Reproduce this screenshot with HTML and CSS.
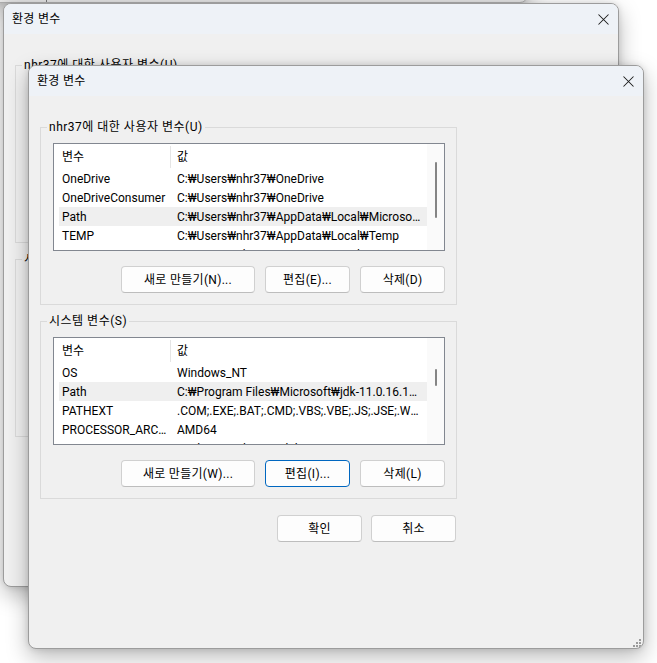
FILE: index.html
```html
<!DOCTYPE html>
<html lang="ko">
<head>
<meta charset="utf-8">
<title>환경 변수</title>
<link rel="stylesheet" href="styles.css">
</head>
<body>
<div class="desktop">
  <div class="window win-third"><div class="third-edge"></div></div>

  <div class="window win-back">
    <div class="titlebar">
      <span class="title">환경 변수</span>
      <svg class="close" width="11" height="11" viewBox="0 0 11 11"><path d="M0.5 0.5L10.5 10.5M10.5 0.5L0.5 10.5" stroke="#1b1b1b" stroke-width="1.05" fill="none"/></svg>
    </div>
    <div class="content">
      <section class="group">
        <div class="group-label">nhr37에 대한 사용자 변수(U)</div>
        <div class="list">
          <div class="list-body">
            <div class="row head"><span class="c1">변수</span><span class="c2">값</span></div>
            <div class="row"><span class="c1">OneDrive</span><span class="c2">C:₩Users₩nhr37₩OneDrive</span></div>
            <div class="row"><span class="c1">OneDriveConsumer</span><span class="c2">C:₩Users₩nhr37₩OneDrive</span></div>
            <div class="row sel"><span class="c1">Path</span><span class="c2">C:₩Users₩nhr37₩AppData₩Local₩Microsoft₩WindowsApps;</span></div>
            <div class="row"><span class="c1">TEMP</span><span class="c2">C:₩Users₩nhr37₩AppData₩Local₩Temp</span></div>
            <div class="row"><span class="c1">TMP</span><span class="c2">C:₩Users₩nhr37₩AppData₩Local₩Temp</span></div>
          </div>
          <div class="scrollbar"><div class="thumb thumb-user"></div></div>
        </div>
        <div class="buttons">
          <button class="btn btn-wide">새로 만들기(N)...</button>
          <button class="btn">편집(E)...</button>
          <button class="btn">삭제(D)</button>
        </div>
      </section>
      <section class="group group-sys">
        <div class="group-label">시스템 변수(S)</div>
        <div class="list">
          <div class="list-body">
            <div class="row head"><span class="c1">변수</span><span class="c2">값</span></div>
            <div class="row"><span class="c1">OS</span><span class="c2">Windows_NT</span></div>
            <div class="row sel"><span class="c1">Path</span><span class="c2">C:₩Program Files₩Microsoft₩jdk-11.0.16.101-hotspot₩bin;</span></div>
            <div class="row"><span class="c1">PATHEXT</span><span class="c2">.COM;.EXE;.BAT;.CMD;.VBS;.VBE;.JS;.JSE;.WSF;.WSH;.MSC</span></div>
            <div class="row"><span class="c1">PROCESSOR_ARCHITECTURE</span><span class="c2">AMD64</span></div>
            <div class="row"><span class="c1">PROCESSOR_IDENTIFIER</span><span class="c2">Intel64 Family 6 Model 154 Stepping 3, GenuineIntel</span></div>
          </div>
          <div class="scrollbar"><div class="thumb thumb-sys"></div></div>
        </div>
        <div class="buttons">
          <button class="btn btn-wide">새로 만들기(W)...</button>
          <button class="btn">편집(I)...</button>
          <button class="btn">삭제(L)</button>
        </div>
      </section>
      <div class="dialog-buttons">
        <button class="btn">확인</button>
        <button class="btn">취소</button>
      </div>
    </div>
  </div>

  <div class="window win-front">
    <div class="titlebar">
      <span class="title">환경 변수</span>
      <svg class="close" width="11" height="11" viewBox="0 0 11 11"><path d="M0.5 0.5L10.5 10.5M10.5 0.5L0.5 10.5" stroke="#1b1b1b" stroke-width="1.05" fill="none"/></svg>
    </div>
    <div class="content">
      <section class="group">
        <div class="group-label">nhr37에 대한 사용자 변수(U)</div>
        <div class="list">
          <div class="list-body">
            <div class="row head"><span class="c1">변수</span><span class="c2">값</span></div>
            <div class="row"><span class="c1">OneDrive</span><span class="c2">C:₩Users₩nhr37₩OneDrive</span></div>
            <div class="row"><span class="c1">OneDriveConsumer</span><span class="c2">C:₩Users₩nhr37₩OneDrive</span></div>
            <div class="row sel"><span class="c1">Path</span><span class="c2">C:₩Users₩nhr37₩AppData₩Local₩Microsoft₩WindowsApps;</span></div>
            <div class="row"><span class="c1">TEMP</span><span class="c2">C:₩Users₩nhr37₩AppData₩Local₩Temp</span></div>
            <div class="row"><span class="c1">TMP</span><span class="c2">C:₩Users₩nhr37₩AppData₩Local₩Temp</span></div>
          </div>
          <div class="scrollbar"><div class="thumb thumb-user"></div></div>
        </div>
        <div class="buttons">
          <button class="btn btn-wide">새로 만들기(N)...</button>
          <button class="btn">편집(E)...</button>
          <button class="btn">삭제(D)</button>
        </div>
      </section>
      <section class="group group-sys">
        <div class="group-label">시스템 변수(S)</div>
        <div class="list">
          <div class="list-body">
            <div class="row head"><span class="c1">변수</span><span class="c2">값</span></div>
            <div class="row"><span class="c1">OS</span><span class="c2">Windows_NT</span></div>
            <div class="row sel"><span class="c1">Path</span><span class="c2">C:₩Program Files₩Microsoft₩jdk-11.0.16.101-hotspot₩bin;</span></div>
            <div class="row"><span class="c1">PATHEXT</span><span class="c2">.COM;.EXE;.BAT;.CMD;.VBS;.VBE;.JS;.JSE;.WSF;.WSH;.MSC</span></div>
            <div class="row"><span class="c1">PROCESSOR_ARCHITECTURE</span><span class="c2">AMD64</span></div>
            <div class="row"><span class="c1">PROCESSOR_IDENTIFIER</span><span class="c2">Intel64 Family 6 Model 154 Stepping 3, GenuineIntel</span></div>
          </div>
          <div class="scrollbar"><div class="thumb thumb-sys"></div></div>
        </div>
        <div class="buttons">
          <button class="btn btn-wide">새로 만들기(W)...</button>
          <button class="btn btn-focus">편집(I)...</button>
          <button class="btn">삭제(L)</button>
        </div>
      </section>
      <div class="dialog-buttons">
        <button class="btn">확인</button>
        <button class="btn">취소</button>
      </div>
    </div>
    <svg class="grip" width="9" height="9" viewBox="0 0 9 9">
      <rect x="7" y="1" width="2" height="2" fill="#9b9b9b"/>
      <rect x="4" y="4" width="2" height="2" fill="#9b9b9b"/>
      <rect x="7" y="4" width="2" height="2" fill="#9b9b9b"/>
      <rect x="1" y="7" width="2" height="2" fill="#9b9b9b"/>
      <rect x="4" y="7" width="2" height="2" fill="#9b9b9b"/>
      <rect x="7" y="7" width="2" height="2" fill="#9b9b9b"/>
    </svg>
  </div>
</div>
</body>
</html>
```

FILE: styles.css
```css
html, body {
  margin: 0;
  padding: 0;
  background: #ffffff;
}

body {
  font-family: Roboto, "Noto Sans CJK KR", sans-serif;
  font-size: 12px;
  line-height: 16px;
  color: #000;
  width: 657px;
  height: 663px;
  overflow: hidden;
}

.desktop {
  position: relative;
  width: 657px;
  height: 663px;
  overflow: hidden;
}

.window {
  position: absolute;
  width: 616px;
  height: 584px;
  box-sizing: border-box;
  border: 1px solid #9c9c9c;
  border-radius: 8px;
  background: #f0f0f0;
  overflow: hidden;
  display: flex;
  flex-direction: column;
  box-shadow: 0 8px 22px rgba(0, 0, 0, 0.28), 0 0 6px rgba(0, 0, 0, 0.12);
}

.win-third {
  left: -20px;
  top: -300px;
  width: 548px;
  height: 303px;
  background: #e6e6e6;
  border-color: #b0b0b0;
}

.third-edge {
  margin-left: 65px;
  height: 100%;
  border-left: 1px solid #777;
}

.win-back {
  left: 3px;
  top: 3px;
}

.win-front {
  left: 28px;
  top: 65px;
}

.titlebar {
  height: 30px;
  flex: none;
  background: #eef2f7;
  display: flex;
  align-items: center;
  justify-content: space-between;
  padding: 0 9px 0 8px;
}

.title {
  line-height: 16px;
  letter-spacing: 0.3px;
}

.close {
  display: block;
}

.content {
  flex: 1;
  padding-left: 11px;
}

.group {
  width: 417px;
  box-sizing: border-box;
  border: 1px solid #dadada;
  margin-top: 31px;
  padding: 0 11px 11px 12px;
}

.group-sys {
  margin-top: 16px;
}

.group-label {
  display: block;
  width: max-content;
  line-height: 16px;
  height: 16px;
  margin: -9px 0 0 -6px;
  padding: 0 2px;
  background: #f0f0f0;
  letter-spacing: 0.5px;
}

.list {
  margin-top: 8px;
  height: 108px;
  box-sizing: border-box;
  border: 1px solid #828790;
  background: #fff;
  display: flex;
  overflow: hidden;
}

.list-body {
  flex: 1;
  min-width: 0;
  overflow: hidden;
}

.row {
  display: flex;
  align-items: center;
  height: 19px;
  margin-left: 5px;
  white-space: nowrap;
}

.row.head {
  height: 25px;
  align-items: stretch;
}

.row.sel {
  background: #efefef;
}

.c1 {
  width: 112px;
  flex: none;
  box-sizing: border-box;
  padding: 0 0 0 3px;
  overflow: hidden;
  text-overflow: ellipsis;
}

.c2 {
  flex: 1;
  min-width: 0;
  padding: 0 5px 0 6px;
  overflow: hidden;
  text-overflow: ellipsis;
}

.head .c1 {
  border-right: 1px solid #e5e5e5;
  margin: 2px 0 1px;
  display: flex;
  align-items: center;
}

.head .c2 {
  display: flex;
  align-items: center;
}

.scrollbar {
  width: 17px;
  flex: none;
  background: #fafafa;
  display: flex;
  justify-content: center;
}

.thumb {
  width: 2px;
  background: #858585;
  border-radius: 1px;
}

.thumb-user {
  margin-top: 18px;
  height: 56px;
}

.thumb-sys {
  margin-top: 31px;
  height: 17px;
}

.buttons {
  display: flex;
  justify-content: flex-end;
  gap: 10px;
  margin-top: 15px;
}

.btn {
  font-family: inherit;
  font-size: 12px;
  color: #000;
  width: 85px;
  height: 27px;
  box-sizing: border-box;
  background: #fdfdfd;
  border: 1px solid #d0d0d0;
  border-bottom-color: #bdbdbd;
  border-radius: 4px;
  padding: 0;
  line-height: 16px;
  letter-spacing: 0.3px;
}

.btn-wide {
  width: 134px;
}

.btn-focus {
  border: 1px solid #0067c0;
}

.dialog-buttons {
  width: 417px;
  box-sizing: border-box;
  display: flex;
  justify-content: flex-end;
  gap: 9px;
  padding-right: 1px;
  margin-top: 16px;
}

.grip {
  position: absolute;
  right: 2px;
  bottom: 1px;
}
```
